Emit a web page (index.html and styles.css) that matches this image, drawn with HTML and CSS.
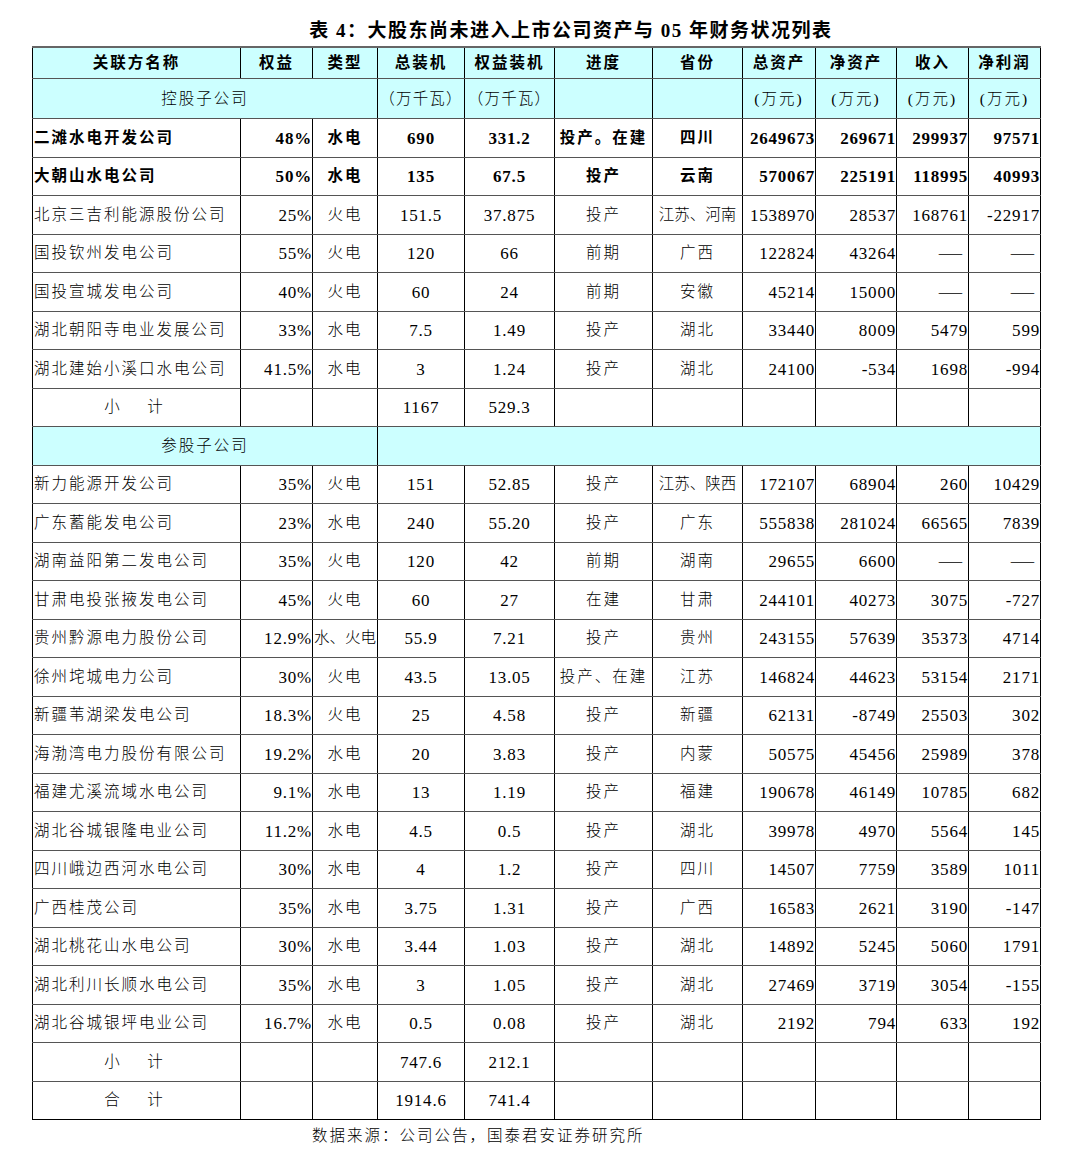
FILE: index.html
```html
<!DOCTYPE html>
<html lang="zh-CN">
<head>
<meta charset="utf-8">
<title>表4</title>
<link rel="stylesheet" href="styles.css">
</head>
<body>
<div class="page">
  <div class="title">表 4：大股东尚未进入上市公司资产与 05 年财务状况列表</div>
  <table class="grid">
    <colgroup>
      <col class="w-name"><col class="w-eq"><col class="w-type"><col class="w-cap"><col class="w-ecap">
      <col class="w-prog"><col class="w-prov"><col class="w-ta"><col class="w-na"><col class="w-rev"><col class="w-np">
    </colgroup>
    <tr class="h1">
      <td class="c">关联方名称</td><td class="c">权益</td><td class="c">类型</td><td class="c">总装机</td><td class="c">权益装机</td>
      <td class="c">进度</td><td class="c">省份</td><td class="c">总资产</td><td class="c">净资产</td><td class="c">收入</td><td class="c">净利润</td>
    </tr>
    <tr class="h2">
      <td class="c" colspan="3">控股子公司</td><td class="c unit">（万千瓦）</td><td class="c unit">（万千瓦）</td>
      <td></td><td></td><td class="c">(万元)</td><td class="c">(万元)</td><td class="c">(万元)</td><td class="c">(万元)</td>
    </tr>
    <tr class="b">
      <td class="l">二滩水电开发公司</td><td class="r">48%</td><td class="c">水电</td><td class="c n">690</td><td class="c n">331.2</td>
      <td class="c">投产。在建</td><td class="c">四川</td><td class="r">2649673</td><td class="r">269671</td><td class="r">299937</td><td class="r">97571</td>
    </tr>
    <tr class="b">
      <td class="l">大朝山水电公司</td><td class="r">50%</td><td class="c">水电</td><td class="c n">135</td><td class="c n">67.5</td>
      <td class="c">投产</td><td class="c">云南</td><td class="r">570067</td><td class="r">225191</td><td class="r">118995</td><td class="r">40993</td>
    </tr>
    <tr>
      <td class="l">北京三吉利能源股份公司</td><td class="r">25%</td><td class="c">火电</td><td class="c n">151.5</td><td class="c n">37.875</td>
      <td class="c">投产</td><td class="c tight">江苏、河南</td><td class="r">1538970</td><td class="r">28537</td><td class="r">168761</td><td class="r">-22917</td>
    </tr>
    <tr>
      <td class="l">国投钦州发电公司</td><td class="r">55%</td><td class="c">火电</td><td class="c n">120</td><td class="c n">66</td>
      <td class="c">前期</td><td class="c">广西</td><td class="r">122824</td><td class="r">43264</td><td class="dash">——</td><td class="dash">——</td>
    </tr>
    <tr>
      <td class="l">国投宣城发电公司</td><td class="r">40%</td><td class="c">火电</td><td class="c n">60</td><td class="c n">24</td>
      <td class="c">前期</td><td class="c">安徽</td><td class="r">45214</td><td class="r">15000</td><td class="dash">——</td><td class="dash">——</td>
    </tr>
    <tr>
      <td class="l">湖北朝阳寺电业发展公司</td><td class="r">33%</td><td class="c">水电</td><td class="c n">7.5</td><td class="c n">1.49</td>
      <td class="c">投产</td><td class="c">湖北</td><td class="r">33440</td><td class="r">8009</td><td class="r">5479</td><td class="r">599</td>
    </tr>
    <tr>
      <td class="l">湖北建始小溪口水电公司</td><td class="r">41.5%</td><td class="c">水电</td><td class="c n">3</td><td class="c n">1.24</td>
      <td class="c">投产</td><td class="c">湖北</td><td class="r">24100</td><td class="r">-534</td><td class="r">1698</td><td class="r">-994</td>
    </tr>
    <tr>
      <td class="c sum">小　计</td><td></td><td></td><td class="c n">1167</td><td class="c n">529.3</td>
      <td></td><td></td><td></td><td></td><td></td><td></td>
    </tr>
    <tr class="sec">
      <td class="c" colspan="3">参股子公司</td><td colspan="8"></td>
    </tr>
    <tr>
      <td class="l">新力能源开发公司</td><td class="r">35%</td><td class="c">火电</td><td class="c n">151</td><td class="c n">52.85</td>
      <td class="c">投产</td><td class="c tight">江苏、陕西</td><td class="r">172107</td><td class="r">68904</td><td class="r">260</td><td class="r">10429</td>
    </tr>
    <tr>
      <td class="l">广东蓄能发电公司</td><td class="r">23%</td><td class="c">水电</td><td class="c n">240</td><td class="c n">55.20</td>
      <td class="c">投产</td><td class="c">广东</td><td class="r">555838</td><td class="r">281024</td><td class="r">66565</td><td class="r">7839</td>
    </tr>
    <tr>
      <td class="l">湖南益阳第二发电公司</td><td class="r">35%</td><td class="c">火电</td><td class="c n">120</td><td class="c n">42</td>
      <td class="c">前期</td><td class="c">湖南</td><td class="r">29655</td><td class="r">6600</td><td class="dash">——</td><td class="dash">——</td>
    </tr>
    <tr>
      <td class="l">甘肃电投张掖发电公司</td><td class="r">45%</td><td class="c">火电</td><td class="c n">60</td><td class="c n">27</td>
      <td class="c">在建</td><td class="c">甘肃</td><td class="r">244101</td><td class="r">40273</td><td class="r">3075</td><td class="r">-727</td>
    </tr>
    <tr>
      <td class="l">贵州黔源电力股份公司</td><td class="r">12.9%</td><td class="c tight">水、火电</td><td class="c n">55.9</td><td class="c n">7.21</td>
      <td class="c">投产</td><td class="c">贵州</td><td class="r">243155</td><td class="r">57639</td><td class="r">35373</td><td class="r">4714</td>
    </tr>
    <tr>
      <td class="l">徐州垞城电力公司</td><td class="r">30%</td><td class="c">火电</td><td class="c n">43.5</td><td class="c n">13.05</td>
      <td class="c">投产、在建</td><td class="c">江苏</td><td class="r">146824</td><td class="r">44623</td><td class="r">53154</td><td class="r">2171</td>
    </tr>
    <tr>
      <td class="l">新疆苇湖梁发电公司</td><td class="r">18.3%</td><td class="c">火电</td><td class="c n">25</td><td class="c n">4.58</td>
      <td class="c">投产</td><td class="c">新疆</td><td class="r">62131</td><td class="r">-8749</td><td class="r">25503</td><td class="r">302</td>
    </tr>
    <tr>
      <td class="l">海渤湾电力股份有限公司</td><td class="r">19.2%</td><td class="c">水电</td><td class="c n">20</td><td class="c n">3.83</td>
      <td class="c">投产</td><td class="c">内蒙</td><td class="r">50575</td><td class="r">45456</td><td class="r">25989</td><td class="r">378</td>
    </tr>
    <tr>
      <td class="l">福建尤溪流域水电公司</td><td class="r">9.1%</td><td class="c">水电</td><td class="c n">13</td><td class="c n">1.19</td>
      <td class="c">投产</td><td class="c">福建</td><td class="r">190678</td><td class="r">46149</td><td class="r">10785</td><td class="r">682</td>
    </tr>
    <tr>
      <td class="l">湖北谷城银隆电业公司</td><td class="r">11.2%</td><td class="c">水电</td><td class="c n">4.5</td><td class="c n">0.5</td>
      <td class="c">投产</td><td class="c">湖北</td><td class="r">39978</td><td class="r">4970</td><td class="r">5564</td><td class="r">145</td>
    </tr>
    <tr>
      <td class="l">四川峨边西河水电公司</td><td class="r">30%</td><td class="c">水电</td><td class="c n">4</td><td class="c n">1.2</td>
      <td class="c">投产</td><td class="c">四川</td><td class="r">14507</td><td class="r">7759</td><td class="r">3589</td><td class="r">1011</td>
    </tr>
    <tr>
      <td class="l">广西桂茂公司</td><td class="r">35%</td><td class="c">水电</td><td class="c n">3.75</td><td class="c n">1.31</td>
      <td class="c">投产</td><td class="c">广西</td><td class="r">16583</td><td class="r">2621</td><td class="r">3190</td><td class="r">-147</td>
    </tr>
    <tr>
      <td class="l">湖北桃花山水电公司</td><td class="r">30%</td><td class="c">水电</td><td class="c n">3.44</td><td class="c n">1.03</td>
      <td class="c">投产</td><td class="c">湖北</td><td class="r">14892</td><td class="r">5245</td><td class="r">5060</td><td class="r">1791</td>
    </tr>
    <tr>
      <td class="l">湖北利川长顺水电公司</td><td class="r">35%</td><td class="c">水电</td><td class="c n">3</td><td class="c n">1.05</td>
      <td class="c">投产</td><td class="c">湖北</td><td class="r">27469</td><td class="r">3719</td><td class="r">3054</td><td class="r">-155</td>
    </tr>
    <tr>
      <td class="l">湖北谷城银坪电业公司</td><td class="r">16.7%</td><td class="c">水电</td><td class="c n">0.5</td><td class="c n">0.08</td>
      <td class="c">投产</td><td class="c">湖北</td><td class="r">2192</td><td class="r">794</td><td class="r">633</td><td class="r">192</td>
    </tr>
    <tr>
      <td class="c sum">小　计</td><td></td><td></td><td class="c n">747.6</td><td class="c n">212.1</td>
      <td></td><td></td><td></td><td></td><td></td><td></td>
    </tr>
    <tr class="last">
      <td class="c sum">合　计</td><td></td><td></td><td class="c n">1914.6</td><td class="c n">741.4</td>
      <td></td><td></td><td></td><td></td><td></td><td></td>
    </tr>
  </table>
  <div class="source">数据来源：公司公告，国泰君安证券研究所</div>
</div>
</body>
</html>
```
FILE: styles.css
```css
body {
  margin: 0;
  background: #ffffff;
  color: #000000;
  font-family: "Liberation Serif", "Noto Sans CJK SC", serif;
}

.page {
  width: 1070px;
}

.title {
  box-sizing: border-box;
  height: 46px;
  padding-top: 19px;
  padding-left: 72px;
  text-align: center;
  font-size: 19px;
  line-height: 24px;
  font-weight: bold;
  letter-spacing: 1.5px;
}

.grid {
  margin-left: 32px;
  width: 1008px;
  border-collapse: collapse;
  table-layout: fixed;
  font-size: 15.5px;
  line-height: 20px;
  font-weight: 300;
  letter-spacing: 2px;
}

.w-name { width: 208px; }
.w-eq { width: 72px; }
.w-type { width: 65px; }
.w-cap { width: 87px; }
.w-ecap { width: 90px; }
.w-prog { width: 98px; }
.w-prov { width: 90px; }
.w-ta { width: 73px; }
.w-na { width: 81px; }
.w-rev { width: 72px; }
.w-np { width: 72px; }

.grid td {
  height: 37.5px;
  padding: 0 1px;
  border-top: 1px solid #555555;
  border-bottom: 1px solid #555555;
  border-left: 1px solid #000000;
  border-right: 1px solid #000000;
  white-space: nowrap;
  overflow: hidden;
  vertical-align: middle;
}

.grid tr.h1 td {
  height: 30px;
  background: #ccffff;
  font-weight: bold;
  border-top: 2px solid #666666;
}

.grid tr.h2 td {
  height: 39px;
  background: #ccffff;
}

.grid tr.sec td {
  background: #ccffff;
}

.grid tr.b td {
  font-weight: bold;
}

.grid tr.last td {
  border-bottom: 1px solid #000000;
}

.l { text-align: left; }
.c { text-align: center; }

.r {
  text-align: right;
  font-size: 17px;
  letter-spacing: 0.8px;
}

.n {
  font-size: 17px;
  letter-spacing: 0.8px;
}

.grid td.r,
.grid td.n {
  height: 35.5px;
  padding-top: 2px;
}

.grid td.r {
  padding-right: 0;
}

.grid td.dash {
  text-align: right;
  padding-right: 0;
  font-family: "Noto Sans CJK SC", sans-serif;
  font-size: 15px;
  letter-spacing: 5px;
}

.grid td.unit {
  padding: 0;
  letter-spacing: 1.2px;
}

.tight {
  letter-spacing: 0;
}

.sum {
  letter-spacing: 6px;
}

.source {
  margin-top: 6px;
  padding-left: 312px;
  font-size: 15.5px;
  line-height: 20px;
  font-weight: 300;
  letter-spacing: 2px;
}
```
